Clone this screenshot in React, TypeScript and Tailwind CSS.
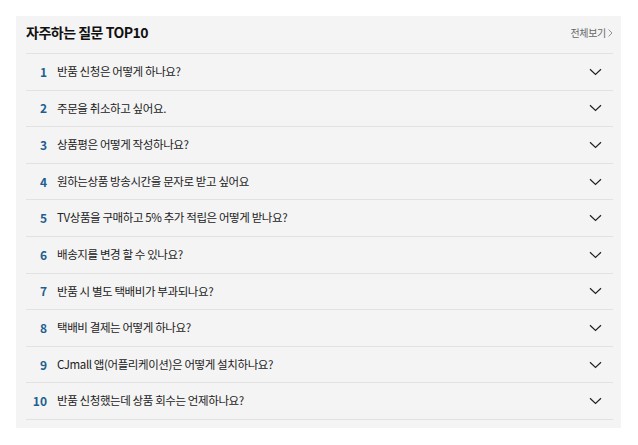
import React from "react";

const items = [
  "반품 신청은 어떻게 하나요?",
  "주문을 취소하고 싶어요.",
  "상품평은 어떻게 작성하나요?",
  "원하는상품 방송시간을 문자로 받고 싶어요",
  "TV상품을 구매하고 5% 추가 적립은 어떻게 받나요?",
  "배송지를 변경 할 수 있나요?",
  "반품 시 별도 택배비가 부과되나요?",
  "택배비 결제는 어떻게 하나요?",
  "CJmall 앱(어플리케이션)은 어떻게 설치하나요?",
  "반품 신청했는데 상품 회수는 언제하나요?",
];

function Chevron() {
  return (
    <svg width="13" height="8" viewBox="0 0 13 8" fill="none">
      <path d="M1 1.2 L6.5 6.5 L12 1.2" stroke="#222" strokeWidth="1.2" />
    </svg>
  );
}

export default function App() {
  return (
    <div
      className="w-[638px] h-[445px] bg-white pt-[16px] pl-[16px]"
      style={{ fontFamily: '"Noto Sans CJK KR", "Noto Sans", sans-serif' }}
    >
      <div className="w-[605px] h-[412px] bg-[#f4f4f4] pl-[10px] pr-[8px]">
        <div className="h-[38px] flex items-start justify-between border-b border-[#e2e2e2] pt-[9px]">
          <div className="text-[14px] font-bold text-[#111] tracking-[-0.5px] leading-[14px]">
            자주하는 질문 TOP10
          </div>
          <div className="text-[10px] text-[#666] leading-[10px] pt-[3px] flex items-center gap-[2px] tracking-[-0.3px]">
            전체보기
            <svg width="5" height="8" viewBox="0 0 5 8" fill="none">
              <path d="M0.6 0.6 L4 4 L0.6 7.4" stroke="#888" strokeWidth="0.9" />
            </svg>
          </div>
        </div>
        {items.map((t, i) => (
          <div
            key={i}
            className="h-[36.6px] flex items-center border-b border-[#e2e2e2]"
          >
            <div className="w-[21px] text-right text-[12px] font-bold text-[#1f5f8f] leading-none">
              {i + 1}
            </div>
            <div className="ml-[10px] flex-1 text-[11.5px] text-[#222] leading-none tracking-[-0.4px]">
              {t}
            </div>
            <div className="mr-[11px] flex items-center">
              <Chevron />
            </div>
          </div>
        ))}
      </div>
    </div>
  );
}
